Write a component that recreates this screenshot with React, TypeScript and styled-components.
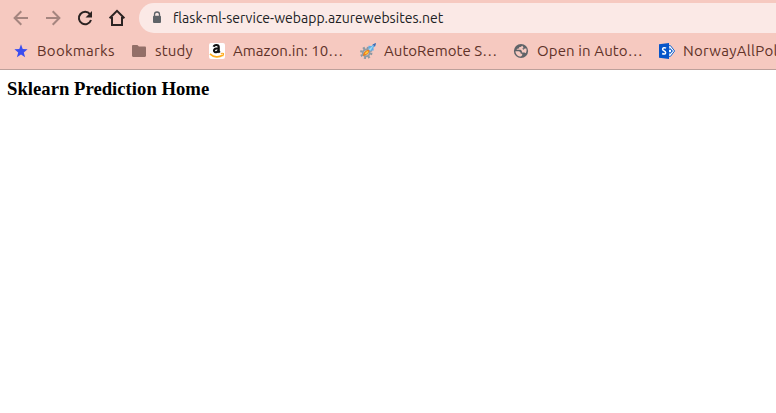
import React from "react";
import styled, { createGlobalStyle } from "styled-components";

const GlobalStyle = createGlobalStyle`
  body { margin: 0; background: #fff; overflow: hidden; }
`;

const Browser = styled.div`
  width: 100vw;
  height: 100vh;
  overflow: hidden;
  display: flex;
  flex-direction: column;
  font-family: Ubuntu, "Noto Sans", sans-serif;
`;

const Toolbar = styled.header`
  height: 36px;
  flex: none;
  display: flex;
  align-items: center;
  background: #f6c9c0;
`;

const NavButtons = styled.nav`
  display: flex;
  gap: 8px;
  padding: 0 10px 0 9px;
`;

const NavButton = styled.button<{ $muted?: boolean }>`
  width: 24px;
  height: 24px;
  padding: 0;
  border: 0;
  background: none;
  display: grid;
  place-items: center;
  color: ${(p) => (p.$muted ? "#a5857f" : "#2b2322")};
`;

const AddressBar = styled.div`
  flex: 1;
  height: 30px;
  display: flex;
  align-items: center;
  gap: 10px;
  padding-left: 12px;
  border-radius: 15px 0 0 15px;
  background: #fbe9e6;
`;

const Url = styled.span`
  font-size: 14px;
  line-height: 20px;
  letter-spacing: 0.02px;
  color: #202124;
  white-space: nowrap;
`;

const BookmarksBar = styled.div`
  height: 34px;
  flex: none;
  display: flex;
  align-items: center;
  padding: 0 0 4px 13px;
  box-sizing: border-box;
  border-bottom: 1px solid #bda09b;
  background: #f6c9c0;
`;

const Bookmark = styled.a<{ $width: number }>`
  flex: 0 0 ${(p) => p.$width}px;
  display: flex;
  align-items: center;
  gap: 8px;
`;

const Label = styled.span<{ $spacing: number }>`
  font-size: 15px;
  line-height: 20px;
  letter-spacing: ${(p) => p.$spacing}px;
  color: #603228;
  white-space: nowrap;
`;

const Page = styled.main`
  flex: 1;
  background: #fff;
  padding: 8px 7px;
`;

const Heading = styled.h3`
  margin: 0;
  font: bold 18.72px/22px "Liberation Serif", serif;
  color: #000;
`;

const BackIcon = () => (
  <svg width="24" height="24" viewBox="0 0 24 24" fill="none" stroke="currentColor" strokeWidth="2">
    <path d="M19 12H6M12.3 5.3L5.6 12l6.7 6.7" />
  </svg>
);
const ForwardIcon = () => (
  <svg width="24" height="24" viewBox="0 0 24 24" fill="none" stroke="currentColor" strokeWidth="2">
    <path d="M5 12h13M11.7 5.3l6.7 6.7-6.7 6.7" />
  </svg>
);
const ReloadIcon = () => (
  <svg width="24" height="24" viewBox="0 0 24 24" fill="none">
    <path d="M17 8.2A6.2 6.2 0 1 0 18 14" stroke="currentColor" strokeWidth="2" />
    <path d="M19 5v6.5h-6.5z" fill="currentColor" />
  </svg>
);
const HomeIcon = () => (
  <svg width="24" height="24" viewBox="0 0 24 24" fill="none" stroke="currentColor" strokeWidth="2">
    <path d="M4.6 12.2L12 4.8l7.4 7.4M7 11v8h10v-8" />
  </svg>
);
const LockIcon = () => (
  <svg width="12" height="16" viewBox="0 0 12 16">
    <path d="M3.5 7V4.5a2.5 2.5 0 0 1 5 0V7" fill="none" stroke="#5f6368" strokeWidth="1.3" />
    <rect x="2" y="5.8" width="8" height="7.2" rx="1" fill="#5f6368" />
  </svg>
);
const StarIcon = () => (
  <svg width="16" height="16" viewBox="0 0 16 16">
    <path d="M8 1.200l1.700 4.700 4.900.3-3.800 3.200 1.300 4.800L8 11.500 3.900 14.200l1.300-4.800-3.800-3.200 4.900-.3z" fill="#3a4df0" />
  </svg>
);
const FolderIcon = () => (
  <svg width="16" height="16" viewBox="0 0 16 16">
    <path d="M2.2 2h4.200l1.500 1.600h5.900c.7 0 1.200.5 1.200 1.200v8c0 .7-.5 1.200-1.200 1.200H2.200C1.500 14 1 13.500 1 12.800V3.200C1 2.500 1.500 2 2.200 2z" fill="#936f68" />
  </svg>
);
const AmazonIcon = () => (
  <svg width="16" height="16" viewBox="0 0 16 16">
    <rect width="16" height="16" rx="2" fill="#fff" />
    <path d="M4.700 3.800C5.300 1.300 9.700 1.400 9.700 4v3.800c0 .9.500 1.200 1 1.800M9.700 5.300C6.700 5.100 5 5.900 5 7.600c0 2.500 4.200 2.100 4.700-.8" fill="none" stroke="#111" strokeWidth="2.200" />
    <path d="M1 10.900c3.600 3.700 9.200 3.900 12.800 1.100" fill="none" stroke="#ffac1c" strokeWidth="1.600" />
    <path d="M11.800 10.500c1.200-.3 2.200-.3 2.700 0 .2.700-.1 1.800-.8 2.800" fill="none" stroke="#ffac1c" strokeWidth="1.100" />
  </svg>
);
const GearRocketIcon = () => (
  <svg width="16" height="16" viewBox="0 0 16 16">
    <circle cx="6.200" cy="9.800" r="5" fill="none" stroke="#8c98a1" strokeWidth="2.400" strokeDasharray="1.964 1.963" />
    <circle cx="6.200" cy="9.800" r="3.500" fill="#cdbdb3" stroke="#8f9ca5" strokeWidth="1.800" />
    <path d="M3 13c-.2-2.500 1.500-5.200 5.300-6.300l1.200 1.200C8.600 10.500 6.300 12 3 13z" fill="#f07c18" />
    <path d="M4.700 11.300c.3-1.700 1.400-2.800 3.100-3.300l.6.700c-.8 1.300-2 2.200-3.700 2.600z" fill="#ffd33c" />
    <path d="M8.400 2.800l3.200.2 1.200-1.600L16 0l-1 3.400-1.600 1.200.3 2.900-3 .3-2.300-2.200z" fill="#62ace5" />
    <path d="M8.700 6.200L14 1.800 10.500 7.700z" fill="#9bd9f5" />
    <path d="M12.500 1.400L16 0l-1 3.500z" fill="#4667ad" />
  </svg>
);
const GlobeIcon = () => (
  <svg width="16" height="16" viewBox="0 0 16 16">
    <circle cx="8" cy="8" r="7.100" fill="#5f6368" />
    <path d="M9.300 2.700L7.500 4H6.200v1.400H4.800L3.400 6.800h4.200l1.300 1.300v1.300h2.600l1.200.9c1-1.600 1.100-3.300.6-4.800h-1.600L10.500 6.800 9 5.600h1.300V4z" fill="#f6c9c0" />
    <path d="M2.400 8.200h3.800l1.500 1.500v1.100h1.500v1.500L8 13.600C4.800 13.500 2.500 11.200 2.400 8.200z" fill="#f6c9c0" />
  </svg>
);
const SharePointIcon = () => (
  <svg width="16" height="16" viewBox="0 0 16 16">
    <path d="M9.500 2.700h2l4.100 5.300-4.100 5.300h-2z" fill="#fff" stroke="#1261ce" strokeWidth="1" />
    <path d="M10 4.500L13.500 8 10 11.500M10 6.300h1.500L13 8l-1.500 1.700H10" fill="none" stroke="#1261ce" strokeWidth="1" />
    <path d="M0 1.300L10 0v16L0 14.700z" fill="#0755c9" />
    <path d="M7 5.200C5.700 4.300 3.600 4.600 3.600 6.200c0 2 3 1.500 3 3.500 0 1.600-2 1.700-3.400.8" fill="none" stroke="#fff" strokeWidth="1.500" />
  </svg>
);

const bookmarks = [
  { label: "Bookmarks", width: 118, spacing: 0.3, Icon: StarIcon },
  { label: "study", width: 78, spacing: 0.2, Icon: FolderIcon },
  { label: "Amazon.in: 10…", width: 151, spacing: 0.07, Icon: AmazonIcon },
  { label: "AutoRemote S…", width: 153, spacing: 0.03, Icon: GearRocketIcon },
  { label: "Open in Auto…", width: 146, spacing: 0.12, Icon: GlobeIcon },
  { label: "NorwayAllPol", width: 150, spacing: 0.3, Icon: SharePointIcon },
];

export default function App() {
  return (
    <Browser>
      <GlobalStyle />
      <Toolbar>
        <NavButtons>
          <NavButton $muted aria-label="Back"><BackIcon /></NavButton>
          <NavButton $muted aria-label="Forward"><ForwardIcon /></NavButton>
          <NavButton aria-label="Reload"><ReloadIcon /></NavButton>
          <NavButton aria-label="Home"><HomeIcon /></NavButton>
        </NavButtons>
        <AddressBar>
          <LockIcon />
          <Url>flask-ml-service-webapp.azurewebsites.net</Url>
        </AddressBar>
      </Toolbar>
      <BookmarksBar>
        {bookmarks.map(({ label, width, spacing, Icon }) => (
          <Bookmark key={label} $width={width}>
            <Icon />
            <Label $spacing={spacing}>{label}</Label>
          </Bookmark>
        ))}
      </BookmarksBar>
      <Page>
        <Heading>Sklearn Prediction Home</Heading>
      </Page>
    </Browser>
  );
}
